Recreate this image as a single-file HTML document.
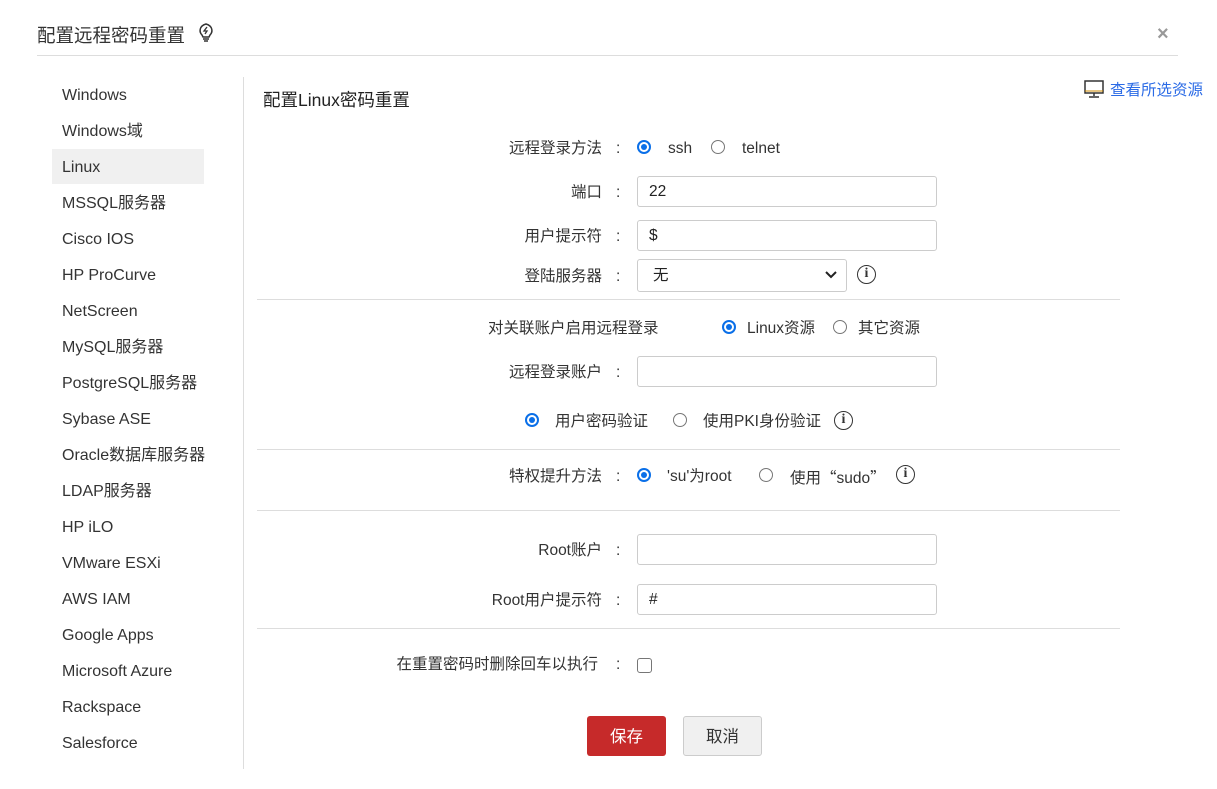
<!DOCTYPE html>
<html><head><meta charset="utf-8"><style>
*{margin:0;padding:0;box-sizing:border-box}
body{width:1217px;height:789px;background:#fff;position:relative;overflow:hidden;font-family:"Liberation Sans","Noto Sans CJK SC",sans-serif;color:#333;font-size:15.5px}
.a{position:absolute;line-height:20px;white-space:nowrap;margin-top:1px}
.r{position:absolute;text-align:right;line-height:20px;white-space:nowrap;margin-top:1px}
.hr{position:absolute;height:1px;background:#ddd}
.in{position:absolute;left:637px;width:300px;height:31px;border:1px solid #ccc;border-radius:3px;padding-left:11px;line-height:30px;font-size:15.5px;color:#222}
.rad{position:absolute;width:14px;height:14px;border:1px solid #767676;border-radius:50%}
.rad.on{border:2px solid #0a6fe8}
.rad.on::after{content:"";position:absolute;left:2px;top:2px;width:6px;height:6px;border-radius:50%;background:#0a6fe8}
.info{position:absolute;width:19px;height:19px;border:1.6px solid #333;border-radius:50%;font-family:"Liberation Serif",serif;font-weight:bold;font-size:14px;text-align:center;line-height:16px;color:#333}
.side{position:absolute;left:62px;font-size:16px;line-height:20px;color:#333}
</style></head><body>
<div class="a" style="left:37px;top:25px;font-size:18.5px;color:#333">配置远程密码重置</div>
<svg style="position:absolute;left:197px;top:22px" width="18" height="20" viewBox="0 0 18 20"><path d="M5 13 C2 10 2 4 9 2 C16 4 16 10 13 13 L12 15 L6 15 Z" fill="none" stroke="#333" stroke-width="1.5"/><path d="M6 17h6M7 19h4" stroke="#333" stroke-width="1.5"/><path d="M10 5 L7 9 H10 L8 12" fill="none" stroke="#333" stroke-width="1.3"/></svg>
<div class="a" style="left:1157px;top:23px;font-size:20px;color:#999;font-weight:bold">×</div>
<div class="hr" style="left:37px;top:55px;width:1141px"></div>

<div style="position:absolute;left:243px;top:77px;width:1px;height:692px;background:#ddd"></div>
<div style="position:absolute;left:52px;top:149px;width:152px;height:35px;background:#f0f0f0"></div>
<div class="side" style="top:86px">Windows</div>
<div class="side" style="top:122px">Windows域</div>
<div class="side" style="top:158px">Linux</div>
<div class="side" style="top:194px">MSSQL服务器</div>
<div class="side" style="top:230px">Cisco IOS</div>
<div class="side" style="top:266px">HP ProCurve</div>
<div class="side" style="top:302px">NetScreen</div>
<div class="side" style="top:338px">MySQL服务器</div>
<div class="side" style="top:374px">PostgreSQL服务器</div>
<div class="side" style="top:410px">Sybase ASE</div>
<div class="side" style="top:446px">Oracle数据库服务器</div>
<div class="side" style="top:482px">LDAP服务器</div>
<div class="side" style="top:518px">HP iLO</div>
<div class="side" style="top:554px">VMware ESXi</div>
<div class="side" style="top:590px">AWS IAM</div>
<div class="side" style="top:626px">Google Apps</div>
<div class="side" style="top:662px">Microsoft Azure</div>
<div class="side" style="top:698px">Rackspace</div>
<div class="side" style="top:734px">Salesforce</div>

<div class="a" style="left:263px;top:89px;font-size:17.5px;color:#222">配置Linux密码重置</div>
<svg style="position:absolute;left:1084px;top:80px" width="20" height="18" viewBox="0 0 20 18"><rect x="1" y="1" width="18" height="12" fill="none" stroke="#333" stroke-width="1.5"/><path d="M10 13v3M5 17h10" stroke="#333" stroke-width="1.5"/><path d="M1 11h18" stroke="#c80" stroke-width="1"/></svg>
<div class="a" style="left:1110px;top:80px;font-size:15.5px;color:#2b6be6">查看所选资源</div>

<div class="r" style="right:615px;top:138px">远程登录方法</div><div class="a" style="left:616px;top:138px">:</div>
<div class="rad on" style="left:637px;top:140px"></div><div class="a" style="left:668px;top:138px">ssh</div>
<div class="rad" style="left:711px;top:140px"></div><div class="a" style="left:742px;top:138px">telnet</div>

<div class="r" style="right:615px;top:182px">端口</div><div class="a" style="left:616px;top:182px">:</div>
<div class="in" style="top:176px">22</div>
<div class="r" style="right:615px;top:226px">用户提示符</div><div class="a" style="left:616px;top:226px">:</div>
<div class="in" style="top:220px">$</div>
<div class="r" style="right:615px;top:266px">登陆服务器</div><div class="a" style="left:616px;top:266px">:</div>
<div class="in" style="top:259px;width:210px;height:33px;line-height:32px;padding-left:15px">无</div>
<svg style="position:absolute;left:825px;top:270px" width="12" height="10"><path d="M1 2 L6 7 L11 2" fill="none" stroke="#222" stroke-width="2"/></svg>
<div class="info" style="left:857px;top:265px">i</div>
<div class="hr" style="left:257px;top:299px;width:863px"></div>

<div class="a" style="left:488px;top:318px">对关联账户启用远程登录</div>
<div class="rad on" style="left:722px;top:320px"></div><div class="a" style="left:747px;top:318px">Linux资源</div>
<div class="rad" style="left:833px;top:320px"></div><div class="a" style="left:858px;top:318px">其它资源</div>

<div class="r" style="right:615px;top:362px">远程登录账户</div><div class="a" style="left:616px;top:362px">:</div>
<div class="in" style="top:356px"></div>

<div class="rad on" style="left:525px;top:413px"></div><div class="a" style="left:555px;top:411px">用户密码验证</div>
<div class="rad" style="left:673px;top:413px"></div><div class="a" style="left:703px;top:411px">使用PKI身份验证</div>
<div class="info" style="left:834px;top:411px">i</div>
<div class="hr" style="left:257px;top:449px;width:863px"></div>

<div class="r" style="right:615px;top:466px">特权提升方法</div><div class="a" style="left:616px;top:466px">:</div>
<div class="rad on" style="left:637px;top:468px"></div><div class="a" style="left:667px;top:466px">'su'为root</div>
<div class="rad" style="left:759px;top:468px"></div><div class="a" style="left:790px;top:466px">使用<span style="font-family:'Noto Sans CJK SC',sans-serif">“</span>sudo<span style="font-family:'Noto Sans CJK SC',sans-serif">”</span></div>
<div class="info" style="left:896px;top:465px">i</div>
<div class="hr" style="left:257px;top:510px;width:863px"></div>

<div class="r" style="right:615px;top:540px">Root账户</div><div class="a" style="left:616px;top:540px">:</div>
<div class="in" style="top:534px"></div>
<div class="r" style="right:615px;top:590px">Root用户提示符</div><div class="a" style="left:616px;top:590px">:</div>
<div class="in" style="top:584px">#</div>
<div class="hr" style="left:257px;top:628px;width:863px"></div>

<div class="r" style="right:619px;top:654px">在重置密码时删除回车以执行</div><div class="a" style="left:616px;top:654px">:</div>
<div style="position:absolute;left:637px;top:658px;width:15px;height:15px;border:1px solid #767676;border-radius:3px"></div>

<div style="position:absolute;left:587px;top:716px;width:79px;height:40px;background:#c62a2a;border-radius:3px;color:#fff;font-size:16.5px;text-align:center;line-height:42px">保存</div>
<div style="position:absolute;left:683px;top:716px;width:79px;height:40px;background:#f0f0f0;border:1px solid #ccc;border-radius:3px;color:#333;font-size:16.5px;text-align:center;line-height:40px">取消</div>
</body></html>
